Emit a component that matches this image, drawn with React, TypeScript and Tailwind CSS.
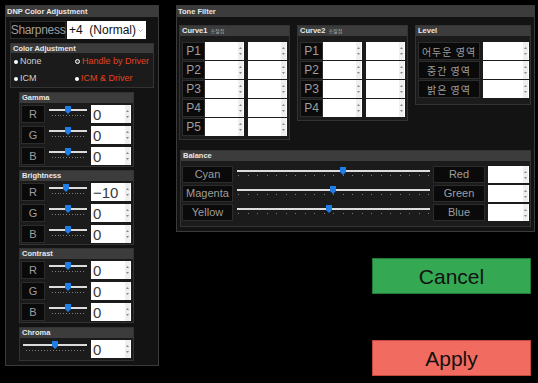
import type { ReactNode } from "react";

function Spinner() {
	return (
		<div className="ml-auto mr-[1px] flex h-full w-[5px] flex-col items-center justify-center gap-[4px] bg-[#efefef]">
			<svg width="3" height="2" viewBox="0 0 3 2">
				<path d="M0 2L1.5 0L3 2Z" fill="#8a8a8a" />
			</svg>
			<svg width="3" height="2" viewBox="0 0 3 2">
				<path d="M0 0L1.5 2L3 0Z" fill="#8a8a8a" />
			</svg>
		</div>
	);
}

function NumBox({ value = "", className = "" }: { value?: string; className?: string }) {
	return (
		<div className={`flex h-full items-center bg-white ${className}`}>
			<span className="pl-[2px] text-[15px] leading-none text-[#3a3a3a]">{value}</span>
			<Spinner />
		</div>
	);
}

function Tag({ children, className = "" }: { children: ReactNode; className?: string }) {
	return (
		<div
			className={`flex h-full items-center justify-center border border-[#2c2c2c] bg-[#0a0a0a] text-[#9e9e9e] ${className}`}
		>
			{children}
		</div>
	);
}

function Slider({
	className,
	thumb,
	dots,
	big = false,
}: {
	className: string;
	thumb: number;
	dots: number;
	big?: boolean;
}) {
	return (
		<div className={`relative h-full ${className}`}>
			<div className="mt-[4px] h-[2px] bg-[#dcdcdc]" />
			<div className={`flex justify-between ${big ? "mt-[3px] px-[1px]" : "mt-[4px] px-[3px]"}`}>
				{Array.from({ length: dots }).map((_, i) => (
					<span key={i} className="h-[1px] w-[1px] bg-[#7c7c7c]" />
				))}
			</div>
			<svg
				className="absolute top-[1px]"
				style={{ left: thumb - 3 }}
				width="6"
				height="8"
				viewBox="0 0 6 8"
			>
				<path d="M0 0H6V5L3 8L0 5Z" fill="#1f7fe6" />
			</svg>
		</div>
	);
}

function Group({
	title,
	extra,
	className = "",
	children,
}: {
	title: string;
	extra?: string;
	className?: string;
	children: ReactNode;
}) {
	return (
		<div className={`flex flex-col border border-[#333] bg-[#1b1b1b] ${className}`}>
			<div className="flex h-[10px] items-center gap-[3px] bg-[#3c3c3c] pl-[2px] text-[7.5px] font-bold leading-none text-[#e8e8e8]">
				{title}
				{extra && <span className="text-[5px] font-normal text-[#b0b0b0]">{extra}</span>}
			</div>
			{children}
		</div>
	);
}

function RgbGroup({ title, rows, className = "" }: { title: string; rows: [string, number, string][]; className?: string }) {
	return (
		<Group title={title} className={`w-[115px] ${className}`}>
			<div className="flex flex-col gap-[3px] pb-[1px] pl-[1px] pr-[2px] pt-[2px]">
				{rows.map(([ch, thumb, val]) => (
					<div key={ch} className="flex h-[18px] items-start">
						<Tag className="w-[24px] text-[11px]">{ch}</Tag>
						<Slider className="ml-[4px] w-[38px]" thumb={thumb} dots={12} />
						<NumBox value={val} className="ml-[4px] w-[40px]" />
					</div>
				))}
			</div>
		</Group>
	);
}

function CurveGroup({ title, count, className = "" }: { title: string; count: number; className?: string }) {
	return (
		<Group title={title} extra="조절점" className={`w-[111px] ${className}`}>
			<div className="flex flex-col gap-[1px] pb-[3px] pl-[2px] pr-[2px] pt-[6px]">
				{Array.from({ length: count }).map((_, i) => (
					<div key={i} className="flex h-[18px]">
						<Tag className="w-[23px] text-[12px]">P{i + 1}</Tag>
						<NumBox className="w-[39px]" />
						<NumBox className="ml-[4px] w-[39px]" />
					</div>
				))}
			</div>
		</Group>
	);
}

function Radio({ label, red = false, ring = false }: { label: string; red?: boolean; ring?: boolean }) {
	return (
		<div className="flex items-center gap-[2px]">
			{ring ? (
				<span className="h-[5px] w-[5px] rounded-full border-[1.5px] border-white bg-[#444]" />
			) : (
				<span className="h-[4px] w-[4px] rounded-full bg-white" />
			)}
			<span className={`text-[9px] leading-none ${red ? "text-[#e4421f]" : "text-[#cfcfcf]"}`}>{label}</span>
		</div>
	);
}

export default function App() {
	const balance: [string, string, number][] = [
		["Cyan", "Red", 106],
		["Magenta", "Green", 96],
		["Yellow", "Blue", 92],
	];
	return (
		<div className="flex h-[383px] w-[538px] items-start bg-black pl-[5px] pt-[5px] font-['Liberation_Sans','Noto_Sans_CJK_KR',sans-serif]">
			{/* Left panel */}
			<div className="flex h-[361px] w-[154px] flex-col border border-[#3a3a3a] bg-[#131313]">
				<div className="flex h-[11px] items-center bg-[#3c3c3c] pl-[1px] text-[7.5px] font-bold leading-none text-[#e8e8e8]">
					DNP Color Adjustment
				</div>

				<div className="ml-[4px] mt-[4px] flex h-[18px]">
					<Tag className="w-[56px] text-[12px] tracking-[-0.3px]">Sharpness</Tag>
					<div className="ml-[1px] flex w-[79px] items-center bg-white pl-[2px] text-[12px] leading-none text-[#111]">
						<span className="whitespace-pre">+4  (Normal)</span>
						<svg className="ml-auto mr-[3px]" width="5" height="3" viewBox="0 0 5 3">
							<path d="M0.5 0.5L2.5 2.5L4.5 0.5" stroke="#9a9a9a" strokeWidth="0.8" fill="none" />
						</svg>
					</div>
				</div>

				<Group title="Color Adjustment" className="ml-[4px] mt-[4px] h-[45px] w-[144px]">
					<div className="grid grid-cols-[61px_1fr] grid-rows-[17px_17px] items-center pl-[3px]">
						<Radio label="None" />
						<Radio label="Handle by Driver" red ring />
						<Radio label="ICM" />
						<Radio label="ICM & Driver" red />
					</div>
				</Group>

				<RgbGroup
					title="Gamma"
					className="ml-[13px] mt-[4px]"
					rows={[
						["R", 19, "0"],
						["G", 19, "0"],
						["B", 19, "0"],
					]}
				/>
				<RgbGroup
					title="Brightness"
					className="ml-[13px] mt-[3px]"
					rows={[
						["R", 17, "−10"],
						["G", 19, "0"],
						["B", 19, "0"],
					]}
				/>
				<RgbGroup
					title="Contrast"
					className="ml-[13px] mt-[3px]"
					rows={[
						["R", 19, "0"],
						["G", 19, "0"],
						["B", 19, "0"],
					]}
				/>

				<Group title="Chroma" className="ml-[13px] mt-[4px] w-[115px]">
					<div className="box-content flex h-[18px] items-start pb-[2px] pl-[3px] pr-[2px] pt-[2px]">
						<Slider className="w-[64px]" thumb={32} dots={20} />
						<NumBox value="0" className="ml-[4px] w-[40px]" />
					</div>
				</Group>
			</div>

			{/* Right column */}
			<div className="ml-[17px] flex w-[359px] flex-col">
				<div className="flex h-[227px] flex-col border border-[#3a3a3a] bg-[#131313]">
					<div className="flex h-[11px] items-center bg-[#3c3c3c] pl-[1px] text-[7.5px] font-bold leading-none text-[#e8e8e8]">
						Tone Filter
					</div>

					<div className="mt-[8px] flex items-start gap-[7px] pl-[2px]">
						<CurveGroup title="Curve1" count={5} />
						<CurveGroup title="Curve2" count={4} />
						<Group title="Level" className="w-[116px]">
							<div className="flex flex-col gap-[1px] pb-[6px] pl-[2px] pr-[1px] pt-[6px]">
								{["어두운 영역", "중간 영역", "밝은 영역"].map((t) => (
									<div key={t} className="flex h-[18px]">
										<Tag className="w-[62px] font-['Noto_Sans_CJK_KR',sans-serif] text-[10px] tracking-[1px]">
											{t}
										</Tag>
										<NumBox className="ml-[3px] w-[46px]" />
									</div>
								))}
							</div>
						</Group>
					</div>

					<Group title="Balance" className="ml-[3px] mt-[10px] w-[351px]">
						<div className="flex flex-col gap-[2px] pb-[5px] pl-[1px] pr-[1px] pt-[5px]">
							{balance.map(([l, r, thumb]) => (
								<div key={l} className="flex h-[17px] items-start">
									<Tag className="w-[51px] text-[11px]">{l}</Tag>
									<Slider className="ml-[4px] w-[193px]" thumb={thumb} dots={21} big />
									<Tag className="ml-[3px] w-[52px] text-[11px]">{r}</Tag>
									<NumBox className="ml-[3px] w-[41px]" />
								</div>
							))}
						</div>
					</Group>
				</div>

				<button className="ml-[196px] mt-[26px] h-[36px] w-[159px] border border-[#1f7a35] bg-[#34a853] text-[21px] leading-none text-[#111]">
					Cancel
				</button>
				<button className="ml-[196px] mt-[46px] h-[36px] w-[159px] border border-[#c4473d] bg-[#f26b60] text-[21px] leading-none text-[#111]">
					Apply
				</button>
			</div>
		</div>
	);
}
